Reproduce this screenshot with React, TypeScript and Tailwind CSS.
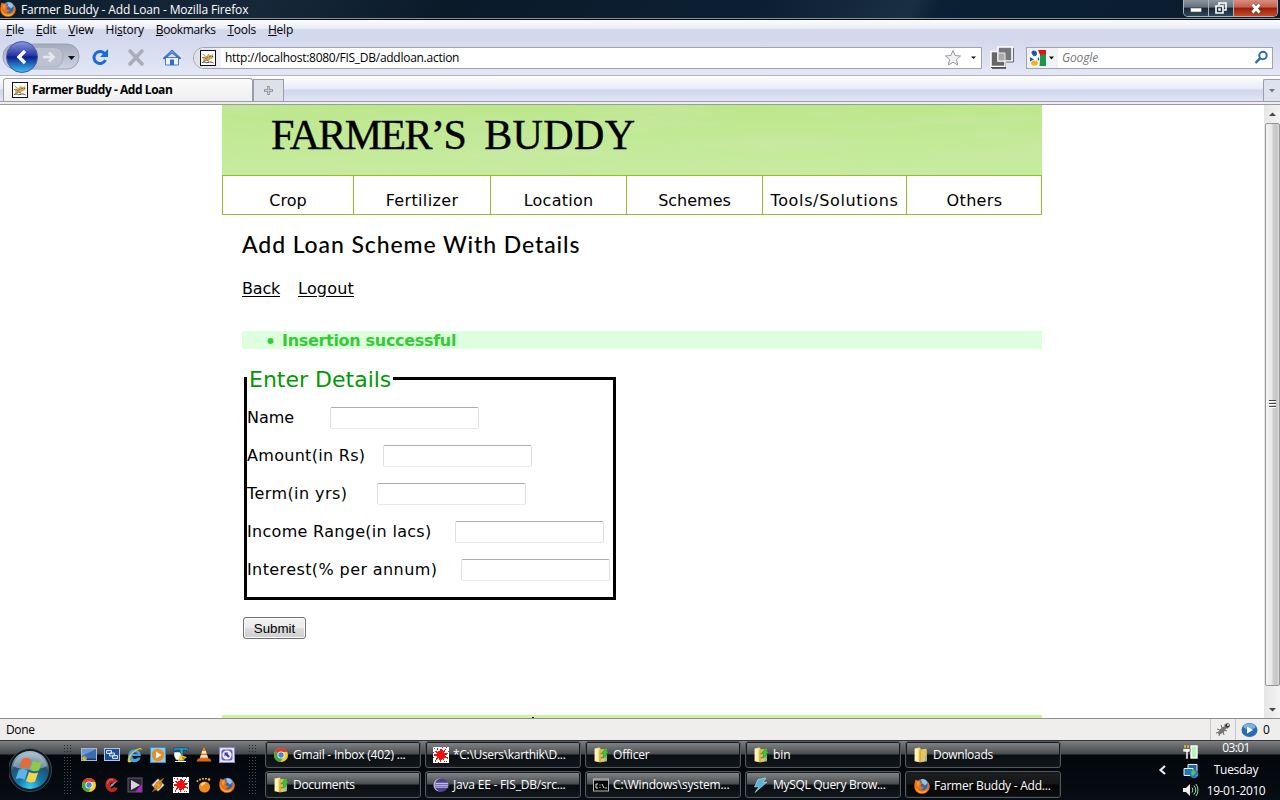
import React from "react";

type P = { children?: React.ReactNode; className?: string };

function T({ children, className = "" }: P) {
  return <span className={`inline-block whitespace-pre ${className}`}>{children}</span>;
}

function Firefox() {
  return (
    <svg width="16" height="16" viewBox="0 0 16 16" className="shrink-0">
      <circle cx="8.3" cy="7.6" r="6.8" fill="#2a66b5" />
      <path d="M7 1.500c3-1 6 .5 6.500 3.500L11 7.500 8 5z" fill="#8fc6ee" />
      <path d="M1.500 1.500C3 2 3.500 2.500 4.500 3c1-.6 2-.8 3-.5C6.500 3.200 6 4 6.200 4.600l2 .6c0 1-1.200 1.300-1.700 1.900C6.800 9 8.500 9.300 10 8.500c-.5 2-2.500 3-4 2.500 3 2.500 7.500 1 7.500-4 0-1.500-.5-2.700-1.200-3.700 2.400 1 3.500 3 3.500 5.200C15.500 13 12 15.800 8 15.800 3.500 15.800.3 12.500.3 8.200.3 5.500 1 3.500 1.500 1.500z" fill="#ea6f16" />
      <path d="M1.500 5.500C1 10 3.500 13.500 8 13.800c3 0 5-1.500 6-3.800-1 4-4 5.300-6.500 5C3 14.500.5 10.500 1.500 5.500z" fill="#fbb92c" />
      <path d="M2.500 4c1.500-1 2.500-.8 3.500-.3-1 .8-.7 1.600 0 2.300-1.500.5-1.500 2-1 3C3 8.500 2.500 6 2.500 4z" fill="#f79a2b" />
    </svg>
  );
}

function Chrome() {
  return (
    <svg width="16" height="16" viewBox="0 0 16 16" className="shrink-0">
      <circle cx="8" cy="8" r="7" fill="#f5cf2c" />
      <path d="M8 8L1.900 4.500A7 7 0 0 1 14.300 5H8z" fill="#de3b2c" />
      <path d="M8 8L1.900 4.500A7 7 0 0 0 7.500 15l3-5.500z" fill="#44a547" />
      <circle cx="8" cy="8" r="3.600" fill="#f3f6fb" />
      <circle cx="8" cy="8" r="2.700" fill="#4a86d4" />
    </svg>
  );
}

function Splat() {
  return (
    <svg width="16" height="16" viewBox="0 0 16 16" className="shrink-0" shapeRendering="crispEdges">
      <rect width="16" height="16" fill="#fff" />
      <path d="M4 0l1.500 4L7 4l1-3 2 3 3-2-1.500 3.500L16 7l-4 1 3 4-4-1.500.5 4-2.500-3L7 15.500 6 11l-3.500 2.500L4 9.500 0 8l4-1.500L2 4l3 1z" fill="#f50d0d" />
      <path d="M1 1h1v1H1zM13 0h1v1h-1zM2 14h1v1H2zM13 14h1v1h-1zM0 10h1v1H0zM9 0h1v1H9zM0 5h1v1H0zM15 4h1v1h-1zM5 15h1v1H5zM14 10h1v1h-1z" fill="#555" />
    </svg>
  );
}

function Folder({ arrow = false }: { arrow?: boolean }) {
  return (
    <svg width="16" height="16" viewBox="0 0 16 16" className="shrink-0">
      <path d="M1.500 1.500l5-1 1 1v13l-1 .8-5-1z" fill="#f4dd85" />
      <path d="M7 2.500l6-.8.8 1v11.500l-7.300 1.300z" fill="#e5c55b" />
      <path d="M2 2l3-.6v13L2 13.800z" fill="#fdf3b8" />
      <path d="M7 3v12" stroke="#a98a2c" strokeWidth=".7" />
      <path d="M12 9.500h1.500V14H12z" fill="#7fb9e3" />
      {arrow && <path d="M8 11c2-.5 2.500-2 2.300-4H8l4-5.500L15.700 6h-2.200c0 3.500-2 5.500-5.500 5z" fill="#3bc42f" stroke="#1b8a1d" strokeWidth=".5" />}
    </svg>
  );
}

function Tomcat() {
  return (
    <svg width="16" height="16" viewBox="0 0 16 16" className="shrink-0">
      <rect x=".5" y=".5" width="15" height="15" fill="#fff" stroke="#111" />
      <path d="M7.500 5l1-1.500 1.500 1.500h1.500L13 3.500l.5 3.500-1.500 2-2 .3L8.500 11 6 10.500l-3 1.300.5-2.300L2 7.500 5 7z" fill="#d1a763" />
      <path d="M2.500 4l3 2M2 7.500L5 7M5 9l3-2M3.500 11.500L6.500 10l2.500 1.500" stroke="#7a6432" strokeWidth=".7" fill="none" />
      <path d="M2 12.500c3-1.500 4 1 6 0s4-.5 5.500.5" stroke="#333" strokeWidth=".9" fill="none" />
      <path d="M9.500 6.500h1M12 6.500h.8" stroke="#333" strokeWidth=".9" />
    </svg>
  );
}

function Eclipse() {
  return (
    <svg width="16" height="16" viewBox="0 0 16 16" className="shrink-0">
      <circle cx="7" cy="8" r="6.600" fill="#b9a4d8" />
      <circle cx="8.600" cy="8" r="6.600" fill="#4a3f92" />
      <path d="M2.500 6.300h12.600M2 8.200h13.500M2.400 10.100h12.800" stroke="#d9dcf4" strokeWidth="1" />
    </svg>
  );
}

function Cmd() {
  return (
    <svg width="16" height="16" viewBox="0 0 16 16" className="shrink-0">
      <rect x=".5" y="2" width="15" height="12" fill="#050505" stroke="#b8b8b8" />
      <path d="M1 3h14" stroke="#d8d8d8" />
      <path d="M5 7H3v4h2M7 7.500v1M7 10v1M9 7l2 4M12 11h2" stroke="#fff" fill="none" strokeWidth=".9" />
    </svg>
  );
}

function Bolt() {
  return (
    <svg width="16" height="16" viewBox="0 0 16 16" className="shrink-0">
      <path d="M5 2.500l8-1.500L10 5.500l4-.4L2 15.500 6 9.500l-4.500.5z" fill="#58b3d6" stroke="#bfe8f5" strokeWidth=".6" />
    </svg>
  );
}

const quick: React.ReactNode[] = [
  <g key="desktop"><rect x=".5" y="1.500" width="15" height="12" fill="#3a6cb5" stroke="#a9b9d2" /><path d="M1 2h14L1 9z" fill="#6d98d6" /><path d="M1 11.500h14V13H1z" fill="#1d3568" /><circle cx="3.500" cy="11.500" r="2.200" fill="#e9bb36" /><path d="M3.500 11.500V9.300A2.200 2.200 0 0 1 5.700 11.500z" fill="#5fb33d" /></g>,
  <g key="windows"><rect x=".5" y="1.500" width="15" height="12" fill="#1d4f96" stroke="#b7c4da" /><path d="M2.500 3.500h5v3h-5zM5.500 6h5v3h-5zM8.500 8.500h5v3h-5z" fill="#2f69b5" stroke="#e5edf8" strokeWidth=".9" /></g>,
  <g key="ie"><path d="M14 9H5.300c.2 3.200 4 3.600 5.200 1.600h3.200C12.500 14 9.800 15.300 8 15.300A6.500 6.500 0 1 1 14 9zM5.500 7h5C10 4.500 6 4.500 5.500 7z" fill="#3ba3ea" /><path d="M14.500 4.500c1.500-3-1-4.500-4-2.700C5 4.500-.5 11 .9 14.700c1 1.500 3 .5 4.600-.7-4 1-3-4.500 1.500-8.500 4.500-4 9-4.500 7.500-1z" fill="#f2bf36" /></g>,
  <g key="player"><rect x=".5" y=".5" width="15" height="15" fill="#86cfef" stroke="#2b94d1" /><circle cx="8" cy="8" r="6.200" fill="#ee8a22" /><path d="M6 4.500l5.500 3.500L6 11.500z" fill="#fff" /></g>,
  <g key="duck"><path d="M1 .8h14v4h-1.500V3H10v9h1.500v2H7V3H2.500v2H1z" fill="#1ea7cf" stroke="#052c60" strokeWidth=".6" /><path d="M1 5h6l1.500 3-1 5H3L1 9z" fill="#fff" stroke="#222" strokeWidth=".5" /><path d="M7 8l7 2-4 3-5 1z" fill="#f2cf24" /><path d="M9 10l3 1-2 1z" fill="#d62a1d" /><path d="M2 14.500h11" stroke="#fff" /></g>,
  <g key="cone"><path d="M7.200.8h1.600L12.500 12h-9z" fill="#f07d13" /><path d="M6.300 4h3.400l.9 2.600H5.400zM4.900 8.300h6.200l.8 2.300H4.100z" fill="#f3efe9" /><path d="M2 11.500h12l1.500 3H.5z" fill="#dd6410" /></g>,
  <g key="launch"><rect x=".5" y=".5" width="15" height="15" fill="#e7e6fa" stroke="#8886cf" /><rect x="2.500" y="2.500" width="11" height="11" rx="2" fill="#6a69c0" /><circle cx="8" cy="8" r="4.600" fill="#f4f4ff" /><path d="M5.500 5.500h4L8.400 6.600l2.500 2.600-1.600 1.500L6.700 8.200 5.500 9.400z" fill="#3d3c9b" /></g>,
  <g key="chrome"><Chrome /></g>,
  <g key="cleaner"><path d="M13.500 4C11.500.5 5 0 2.500 3.500-.5 8.500 3 15 8.500 15c2.500 0 4.500-1.500 5-4l-3.500-1c-1 2-3.500 2-4-.5C5.500 6 8 4.500 9.500 6.500z" fill="#c2261c" /><path d="M14 3L8.500 9 5.500 10.500 7 7.500z" fill="#8ea7b8" /><path d="M9 3C6.500 1.500 4 3.500 3.500 6.500" stroke="#f1877b" fill="none" /></g>,
  <g key="media"><rect x="1" y="1" width="14" height="14" fill="#2c2333" stroke="#665a70" /><path d="M4 3l9 5-9 5z" fill="#d9d4dc" /><path d="M13 9l2-1.500V15H8z" fill="#a22dbc" /></g>,
  <g key="winamp"><path d="M8 1.500L14.500 8 8 14.500 1.500 8z" fill="#eee" stroke="#333" strokeWidth=".6" /><path d="M14 1L6.500 5.500 4 9.500l3-.5-5 6 8-4.500L12.300 6.500 9.500 7z" fill="#f39a18" stroke="#8a4c08" strokeWidth=".6" /></g>,
  <g key="splat"><Splat /></g>,
  <g key="gom"><circle cx="8.500" cy="10" r="5.600" fill="#f18a1b" /><path d="M4.500 8a4 4 0 0 1 5-2.500c0 2-3 2-3 4z" fill="#ffd59a" /><g fill="#f5b62f"><circle cx="1.500" cy="4" r="1" /><circle cx="4" cy="2.500" r="1" /><circle cx="7" cy="1.800" r="1" /><circle cx="10" cy="1.800" r="1" /><circle cx="13" cy="2.500" r="1.300" /></g></g>,
  <g key="firefox"><Firefox /></g>,
];

const tasks: { label: string; icon: React.ReactNode; ls: string; active?: boolean }[] = [
  { label: "Gmail - Inbox (402) ...", icon: <Chrome />, ls: "tracking-[-0.22px]" },
  { label: "*C:\\Users\\karthik\\D...", icon: <Splat />, ls: "tracking-[-0.31px]" },
  { label: "Officer", icon: <Folder arrow />, ls: "tracking-[-0.2px]" },
  { label: "bin", icon: <Folder arrow />, ls: "tracking-[-0.1px]" },
  { label: "Downloads", icon: <Folder />, ls: "tracking-[-0.3px]" },
  { label: "Documents", icon: <Folder arrow />, ls: "tracking-[-0.28px]" },
  { label: "Java EE - FIS_DB/src...", icon: <Eclipse />, ls: "tracking-[-0.2px]" },
  { label: "C:\\Windows\\system...", icon: <Cmd />, ls: "tracking-[-0.15px]" },
  { label: "MySQL Query Brow...", icon: <Bolt />, ls: "tracking-[-0.3px]" },
  { label: "Farmer Buddy - Add...", icon: <Firefox />, ls: "tracking-[-0.22px]", active: true },
];

function Grip() {
  return (
    <svg width="8" height="50" viewBox="0 0 8 50" className="shrink-0" shapeRendering="crispEdges">
      {Array.from({ length: 17 }, (_, i) => (
        <path key={i} d={`M0 ${i * 3 + 0.5}h1m2 0h1m2 0h1`} stroke={i < 4 ? "#2a2a2c" : "#4b4e50"} />
      ))}
    </svg>
  );
}

function Field({ label, gap }: { label: string; gap: string }) {
  return (
    <div className="flex h-[22px] items-center">
      <div className={`shrink-0 ${gap}`}><T>{label}</T></div>
      <input aria-label={label} className="h-[22px] w-[149px] rounded-[2px] border border-[#e3e9ef] border-x-[#dde0e7] border-t-[#abadb3] bg-white outline-none" />
    </div>
  );
}

export default function App() {
  return (
    <div className="flex h-[800px] w-[1280px] flex-col overflow-hidden bg-white font-['Open_Sans',sans-serif] text-[12px] text-black">
      {/* Title bar */}
      <header className="flex h-5 shrink-0 flex-col border-b border-[#05080d] bg-[linear-gradient(115deg,#0c1d2e_0%,#17283a_20%,#0a1a29_35%,#0c1f33_60%,#1b2f42_71%,#0b2034_73%,#0a1c2e_100%)]">
        <div className="flex h-[19px] justify-between border-b border-[#87929c]">
          <div className="flex h-[18px] items-center gap-[5px] text-white"><Firefox /><T className="pt-px tracking-[-0.15px]">Farmer Buddy - Add Loan - Mozilla Firefox</T></div>
          <div className="mr-[2px] flex h-[17px] overflow-hidden rounded-b-[5px] border border-t-0 border-[#aab3bb]">
            <div className="flex w-[25px] items-center justify-center border-r border-[#aab3bb] bg-[linear-gradient(#8b959f_0,#65717c_45%,#152535_50%,#31485c)] pt-[3px]"><svg width="12" height="6"><rect x=".5" y="1" width="11" height="4" fill="#fff" stroke="#555" strokeWidth=".6" /></svg></div>
            <div className="flex w-[25px] items-center justify-center border-r border-[#aab3bb] bg-[linear-gradient(#8b959f_0,#65717c_45%,#152535_50%,#31485c)]"><svg width="12" height="12" fill="none" stroke="#fff" strokeWidth="1.600"><path d="M4 3V1h7v7H9" /><path d="M1 4h7v7H1z" /><path d="M4 7h1v1H4z" /></svg></div>
            <div className="flex w-[43px] items-center justify-center bg-[linear-gradient(#d98d7e_0,#c0604b_45%,#9a1c05_50%,#c84a2c)]"><svg width="12" height="11"><path d="M2.500 1.500l7 8M9.500 1.500l-7 8" stroke="#555" strokeWidth="4" /><path d="M2.500 1.500l7 8M9.500 1.500l-7 8" stroke="#fff" strokeWidth="2.800" /></svg></div>
          </div>
        </div>
      </header>

      {/* Menu bar */}
      <nav className="flex h-5 shrink-0 items-center gap-3 bg-[linear-gradient(#fdfdff_0,#e6eaf5_9px,#d3d9ed_9px)] pl-[6px] tracking-[-0.25px]">
        <T><u>F</u>ile</T><T><u>E</u>dit</T><T><u>V</u>iew</T><T>Hi<u>s</u>tory</T><T className="tracking-[-0.4px]"><u>B</u>ookmarks</T><T><u>T</u>ools</T><T><u>H</u>elp</T>
      </nav>

      {/* Navigation toolbar */}
      <div className="flex h-9 shrink-0 items-center border-b border-[#b1b5c5] bg-[linear-gradient(#d3d9ed,#e3e7f6)]">
        <svg width="190" height="34" viewBox="0 41 190 34" className="shrink-0">
          <defs>
            <linearGradient id="bk" x1="0" y1="0" x2="0" y2="1"><stop offset="0" stopColor="#8a9be0" /><stop offset=".45" stopColor="#2637a4" /><stop offset=".5" stopColor="#0b1f8e" /><stop offset="1" stopColor="#3ac6f5" /></linearGradient>
            <linearGradient id="tray" x1="0" y1="0" x2="0" y2="1"><stop offset="0" stopColor="#a3aabd" /><stop offset="1" stopColor="#ced4e4" /></linearGradient>
            <linearGradient id="hm" x1="0" y1="0" x2="0" y2="1"><stop offset="0" stopColor="#7fa8e6" /><stop offset="1" stopColor="#2a62bd" /></linearGradient>
          </defs>
          <rect x="3" y="44" width="76" height="25" rx="12" fill="url(#tray)" stroke="#9aa1b3" />
          <path d="M34 47.500h20c6 0 9 4 9 9.500s-3 10-9 10H34z" fill="#bcc2d0" stroke="#a8aebd" />
          <path d="M49 52.500l4.500 4.500-4.500 4.500M43 57h9" stroke="#e4e7ee" strokeWidth="2.600" fill="none" />
          <path d="M68 56h7l-3.500 4z" fill="#111" />
          <circle cx="22" cy="57" r="15.500" fill="url(#bk)" stroke="#4a56a5" />
          <path d="M25 51l-6 6 6 6" stroke="#fff" strokeWidth="3.400" fill="none" />
          <path d="M104.500 53.500A6 6 0 1 0 105.500 60" stroke="#1a6bd8" strokeWidth="3" fill="none" />
          <path d="M108 49v8h-8z" fill="#1a6bd8" />
          <path d="M130 51l12 13M142 51l-12 13" stroke="#a9adb8" strokeWidth="3.600" strokeLinecap="round" />
          <path d="M165.500 57.500h13V65h-13z" fill="#eef4fd" stroke="#4a7ac8" />
          <path d="M163 58.500l9-8.500 9 8.500h-2l-7-5.500-7 5.500z" fill="url(#hm)" stroke="#3a6fc5" />
          <path d="M170 59.500h4V65h-4z" fill="#2f6ed0" />
        </svg>
        <div className="ml-[3px] flex h-[22px] w-[789px] items-center overflow-hidden rounded-l-[11px] border border-[#a0a3ab] bg-white">
          <div className="flex h-full w-[27px] shrink-0 items-center justify-end bg-[linear-gradient(90deg,#dcdee6,#f0f1f5)] pr-[5px]"><Tomcat /></div>
          <T className="ml-1 tracking-[-0.27px]">http://localhost:8080/FIS_DB/addloan.action</T>
          <svg width="36" height="18" viewBox="0 0 36 18" className="ml-auto shrink-0"><path d="M8 1.500l2.200 5 5.300.5-4 3.600 1.200 5.400L8 13.200 3.300 16l1.200-5.400-4-3.600 5.300-.5z" fill="#f0f0f0" stroke="#94979c" /><path d="M26 7.500h5L28.500 10z" fill="#111" /></svg>
        </div>
        <svg width="24" height="26" viewBox="0 0 24 26" className="ml-2 shrink-0"><path d="M1 7h15v16H1z" fill="#111" /><path d="M1 6.500h14v15H1z" fill="#666" stroke="#fff" strokeWidth="1.500" /><path d="M8 2h14v14H8z" fill="#777" stroke="#fff" strokeWidth="1.500" /><path d="M8 8h7v8H8z" fill="#aaa" stroke="#eee" /><path d="M23.500 3v14H16M2 23.500h14" stroke="#333" fill="none" strokeWidth=".7" /></svg>
        <div className="ml-3 flex h-[22px] w-[247px] items-center border border-[#a0a3ab] bg-white">
          <div className="flex h-full w-[31px] shrink-0 items-center gap-[3px] bg-[#f1f2f5] pl-[3px]">
            <svg width="16" height="16" viewBox="0 0 16 16"><path d="M7 0h9v6l-8 1z" fill="#e0120f" /><path d="M11 4.500h5V16H9.500L10 8z" fill="#17964c" /><path d="M0 0h8l2 5-1 11H0z" fill="#fff" /><path d="M2 1C4-.5 7 1 7 3.500S4.500 7 3 5.500 1 2.500 2 1z" fill="#1c57b8" /><path d="M8 7c2 2 1.500 3.500-.5 3.500z" fill="#1c57b8" /><path d="M0 7l4 2.500L0 11.500z" fill="#1c57b8" /><ellipse cx="4.500" cy="13" rx="3.500" ry="2.600" fill="#f3b313" /></svg>
            <svg width="5" height="4"><path d="M0 .5h5L2.500 3.500z" fill="#111" /></svg>
          </div>
          <T className="ml-[4px] tracking-[-0.15px] italic text-[#777]">Google</T>
          <svg width="15" height="15" viewBox="0 0 15 15" className="ml-auto mr-[3px]"><circle cx="9" cy="5.500" r="3.700" fill="none" stroke="#2d6cab" strokeWidth="2" /><path d="M6.200 8.200L1.500 13" stroke="#2d6cab" strokeWidth="2.400" /></svg>
        </div>
      </div>

      {/* Tab strip */}
      <div className="flex h-[26px] shrink-0 items-end border-b border-[#9b9eaa] bg-[linear-gradient(#fff_0,#e8ebf7_13px,#ced5ec_14px,#e3e7f6_26px)]">
        <div className="ml-[3px] flex h-[23px] w-[250px] items-center gap-1 rounded-t-[3px] border border-b-0 border-[#9b9ea8] bg-[linear-gradient(#fafafa,#efefef)] pl-2"><Tomcat /><T className="font-bold tracking-[-0.45px]">Farmer Buddy - Add Loan</T></div>
        <div className="flex h-[22px] w-[31px] items-center justify-center border border-b-0 border-[#9b9ea8] bg-[#dfe1e8]"><svg width="9" height="9"><path d="M4.500 0v9M0 4.500h9" stroke="#8a8c90" strokeWidth="2.400" /><path d="M4.500 1v7M1 4.500h7" stroke="#ddd" strokeWidth=".8" /></svg></div>
        <div className="ml-auto flex h-[22px] w-[17px] items-center justify-center rounded-tl-[2px] border border-b-0 border-r-0 border-[#9b9ea8] bg-[#dee2ee]"><svg width="6" height="4"><path d="M0 0h6L3 3.500z" fill="#7b7b76" /></svg></div>
      </div>
      <div className="h-[3px] shrink-0 border-b border-[#9a9a9a] bg-[#ededed]" />

      {/* Page viewport */}
      <div className="flex h-[613px] shrink-0">
        <main className="flex w-[1264px] flex-col pl-[222px] font-['DejaVu_Sans',sans-serif] text-[16px]">
          <div className="relative h-[70px] w-[820px] shrink-0 overflow-hidden bg-[linear-gradient(#bbe78b,#c3ea98_60%,#c5eb9d)] pl-[49px]">
            <svg className="absolute inset-0" width="820" height="70">
              <filter id="grass" x="0" y="0" width="100%" height="100%">
                <feTurbulence type="fractalNoise" baseFrequency=".008 .09" numOctaves="3" seed="4" />
                <feColorMatrix values="0 0 0 0 .62  0 0 0 0 .8  0 0 0 0 .42  1.800 0 0 0 -.72" />
              </filter>
              <rect width="820" height="70" filter="url(#grass)" opacity=".55" />
            </svg>
            <div className="relative flex gap-[19px] pt-[8px] font-['Liberation_Serif',serif] text-[42px] leading-[44px] [-webkit-text-stroke:0.4px_#000]">
              <T className="tracking-[-1.6px]">FARMER’S</T>
              <T className="tracking-[0.4px]">BUDDY</T>
            </div>
          </div>
          <div className="grid h-10 w-[820px] shrink-0 grid-cols-[131px_137px_136px_136px_144px_136px] grid-rows-[38px] border-y border-r border-[#96bc2b] text-center leading-[49px]">
            <div className="h-[38px] border-l border-[#96bc2b]"><T>Crop</T></div>
            <div className="h-[38px] border-l border-[#96bc2b]"><T className="tracking-[0.35px]">Fertilizer</T></div>
            <div className="h-[38px] border-l border-[#96bc2b]"><T className="tracking-[0.25px]">Location</T></div>
            <div className="h-[38px] border-l border-[#96bc2b]"><T>Schemes</T></div>
            <div className="h-[38px] border-l border-[#96bc2b]"><T className="tracking-[0.65px]">Tools/Solutions</T></div>
            <div className="h-[38px] border-l border-[#96bc2b]"><T className="tracking-[0.35px]">Others</T></div>
          </div>
          <section className="flex w-[820px] flex-col items-start pl-5">
            <h1 className="mt-[15px] h-7 font-['Lato',sans-serif] text-[23px] font-medium leading-7"><T className="tracking-[0.89px]">Add Loan Scheme With Details</T></h1>
            <div className="mt-[19px] flex h-6 gap-[18px] leading-6 underline underline-offset-2"><T className="tracking-[-0.2px]">Back</T><T className="tracking-[0.2px]">Logout</T></div>
            <div className="mt-[30px] flex h-[18px] w-[800px] items-center bg-[#dfd] pl-[25px] font-bold leading-[20px] text-[#3c3]">
              <svg width="15" height="8"><circle cx="3.500" cy="5" r="3" fill="#32cd32" /></svg><T className="pt-px tracking-[-0.31px]">Insertion successful</T>
            </div>
            <div className="ml-[2px] mt-7 flex h-[223px] w-[372px] flex-col border-[3px] border-black">
              <div className="-mt-[15px] h-7 w-[146px] bg-white pl-[2px] text-[22px] leading-[29px] text-[#090]">Enter Details</div>
              <div className="mt-[14px] flex flex-col gap-4">
                <Field label="Name" gap="w-[83px]" />
                <Field label="Amount(in Rs)" gap="w-[136px] tracking-[0.3px]" />
                <Field label="Term(in yrs)" gap="w-[130px] tracking-[0.42px]" />
                <Field label="Income Range(in lacs)" gap="w-[208px] tracking-[0.3px]" />
                <Field label="Interest(% per annum)" gap="w-[214px] tracking-[0.4px]" />
              </div>
            </div>
            <button className="ml-px mt-[17px] h-[22px] w-[63px] rounded-[3px] border border-[#707070] bg-[linear-gradient(#f2f2f2_0,#ebebeb_50%,#dddddd_50%,#cfcfcf)] pt-px font-['Liberation_Sans',sans-serif] text-[13.333px] leading-5 shadow-[inset_0_0_0_1px_#fbfbfb]">Submit</button>
          </section>
          <footer className="mt-auto flex h-[3px] w-[820px] justify-center bg-[#cdf1a2]"><span className="mr-[198px] mt-[2px] h-px w-[2px] bg-black" /></footer>
        </main>
        <aside className="flex w-4 flex-col items-center bg-[linear-gradient(90deg,#e6e6e6,#f3f3f3)]">
          <svg width="16" height="18"><path d="M5 11l3.500-3.500L12 11z" fill="#444" /></svg>
          <div className="flex h-[563px] w-[15px] items-center justify-center rounded-[2px] border border-[#979797] bg-[linear-gradient(90deg,#f4f4f4_0,#e6e6e6_45%,#cfcfcf_55%,#c6c6c6_80%,#dcdcdc)]"><svg width="7" height="9"><path d="M0 .5h7M0 3.500h7M0 6.500h7" stroke="#444" /><path d="M0 1.500h7M0 4.500h7M0 7.500h7" stroke="#fff" /></svg></div>
          <svg width="16" height="32"><path d="M5 22l3.500 3.500L12 22z" fill="#444" /></svg>
        </aside>
      </div>

      {/* Status bar */}
      <div className="flex h-[22px] shrink-0 items-center border-t border-[#8f8f8f] bg-[#f0eded] pl-[6px]">
        <T className="tracking-[-0.35px]">Done</T>
        <div className="ml-auto flex h-full w-[25px] items-center justify-center border-l border-[#c9c6c6]"><svg width="16" height="16" viewBox="0 0 16 16"><path d="M3 12L11 4M6 3l1.500 4M10 2v4M2 7l4 1.500M12 9L8.500 8M13 6h-3M4 14l1-4M9 13l-1-4M1 11l4-1" stroke="#666" strokeWidth="1" /><ellipse cx="7" cy="8.500" rx="5" ry="2.200" transform="rotate(-45 7 8.500)" fill="#777" /><circle cx="12.500" cy="3.500" r="2.300" fill="#333" /><circle cx="13" cy="3" r=".9" fill="#fff" /></svg></div>
        <div className="flex h-full w-[45px] items-center gap-[5px] border-l border-[#c9c6c6] pl-[5px]"><svg width="17" height="16"><ellipse cx="8.500" cy="8" rx="8" ry="7" fill="#2a6cb4" /><ellipse cx="8.500" cy="4.500" rx="6" ry="3" fill="#7bb0e2" /><path d="M6 4.500l6 3.500-6 3.500z" fill="#fff" /></svg><T>0</T></div>
      </div>

      {/* Taskbar */}
      <div className="flex h-[60px] shrink-0 border-t border-[#303338] bg-[linear-gradient(#8b8d8f_0,#77797b_1px,#45484a_13px,#03070c_14px,#070d14_60px)] text-white">
        <div className="flex w-16 shrink-0 justify-center pt-[5px]">
          <svg width="46" height="46" viewBox="0 0 46 46">
            <defs><radialGradient id="orb" cx=".5" cy=".95" r=".9"><stop offset="0" stopColor="#31d2fb" /><stop offset=".35" stopColor="#1578a8" /><stop offset=".7" stopColor="#24506e" /><stop offset="1" stopColor="#9fb9ca" /></radialGradient></defs>
            <circle cx="21" cy="24" r="21.500" fill="#14191d" stroke="#55616a" strokeWidth=".7" />
            <circle cx="21" cy="24" r="19" fill="url(#orb)" />
            <path d="M4 20a17.500 17 0 0 1 34 0c-10 5-24 5-34 0z" fill="#b8cbd6" opacity=".55" />
            <g transform="rotate(5 21 24)">
              <path d="M12.500 13.500c3.500-1.600 6-1.400 9 .2l-2.200 9.300c-3-1.600-5.800-1.600-9 0z" fill="#ea6a30" />
              <path d="M23 14.500c3 1.400 5.800 1.400 9.300-.3l-2.300 9.600c-3.200 1.500-6 1.400-9.200 0z" fill="#8fc84a" />
              <path d="M9.800 24.800c3-1.600 5.900-1.400 8.900.2l-2.200 9.300c-3-1.600-5.700-1.600-8.900 0z" fill="#5fb2ec" />
              <path d="M20.200 26c3 1.400 5.900 1.400 9.100-.2L27 35.300c-3 1.500-5.800 1.300-9-.1z" fill="#fbd34a" />
            </g>
          </svg>
        </div>
        <div className="flex w-[17px] shrink-0 pt-1"><Grip /></div>
        <div className="grid h-[46px] w-[161px] shrink-0 grid-cols-[repeat(7,23px)] grid-rows-[30px_16px] pt-[6px]">
          {quick.map((g, i) => <svg key={i} width="16" height="16" viewBox="0 0 16 16">{g}</svg>)}
        </div>
        <div className="flex w-[23px] shrink-0 pl-[7px] pt-1"><Grip /></div>
        <div className="grid w-[800px] shrink-0 grid-cols-[repeat(5,156px)] grid-rows-[27px_27px] gap-x-1 gap-y-[3px]">
          {tasks.map((t) => (
            <div key={t.label} className={`flex items-center gap-1 rounded-[3px] border border-[#55595c] shadow-[inset_0_0_0_1px_#15191d] ${t.active ? "bg-[linear-gradient(#1d1e20_0,#151617_48%,#050505_52%,#0c0d0e)] pl-[8px] pt-[2px]" : "bg-[linear-gradient(#85888a_0,#4a4d50_48%,#0a0e13_52%,#12171b)] pl-[7px]"}`}>
              {t.icon}<T className={t.ls}>{t.label}</T>
            </div>
          ))}
        </div>
        <div className="ml-auto flex w-[122px] shrink-0">
          <svg width="8" height="10" viewBox="0 0 8 10" className="mt-6"><path d="M7 1L2.500 5 7 9" stroke="#e8eaf4" strokeWidth="2.200" fill="none" /></svg>
          <div className="ml-[17px] flex w-4 shrink-0 flex-col gap-[3px] pt-[3px]">
            <svg width="16" height="16"><rect x="8" y="2" width="6" height="12" fill="#b5f3bd" stroke="#fff" strokeWidth="1.400" /><path d="M2 1v3M5 1v3" stroke="#f2c52a" strokeWidth="1.500" /><path d="M0 4.500h7v3.500H5V15H3V8H0z" fill="#f4f4f4" stroke="#333" strokeWidth=".5" /></svg>
            <svg width="16" height="16"><path d="M5 1.500h9v7H5z" fill="#1c63a8" stroke="#e8f1fa" /><path d="M1 5.500h9v7H1z" fill="#1f73bb" stroke="#e8f1fa" /><circle cx="11" cy="11" r="4.300" fill="#2a74d6" /><path d="M8 9l3-2 2 2-2 3-2 1zM13 12l2-1-1 3z" fill="#52c83a" /></svg>
            <svg width="16" height="16"><path d="M0 6h3l4-4v12l-4-4H0z" fill="#eee" /><path d="M9 5.500q1.800 2.500 0 5M11 3.500q3.500 4.500 0 9M13 2q4 6 0 12" stroke="#9be0a5" fill="none" /></svg>
          </div>
          <div className="flex w-[74px] flex-col items-center text-center"><T className="h-[18px] leading-[13px] tracking-[-0.6px]">03:01</T><T className="h-[22px] leading-[23px] tracking-[-0.3px]">Tuesday</T><T className="h-[20px] leading-[22px] tracking-[-0.4px]">19-01-2010</T></div>
        </div>
      </div>
    </div>
  );
}
